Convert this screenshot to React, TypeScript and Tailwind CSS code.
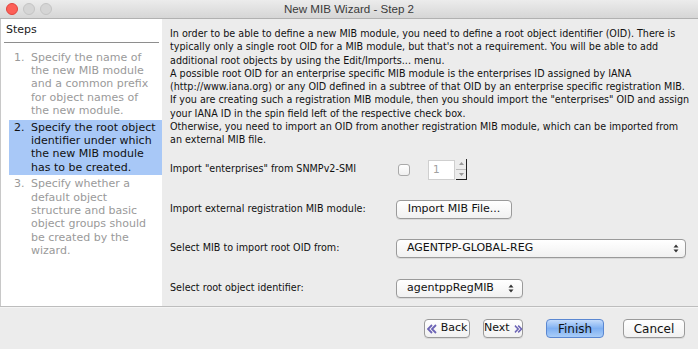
const body = { fontFamily: '"DejaVu Sans", "Liberation Sans", sans-serif' }

const DoubleChevron = ({ dir }: { dir: "left" | "right" }) => (
  <svg width="10" height="10" viewBox="0 0 10 10" className={dir === "right" ? "rotate-180" : ""}>
    <path d="M5 1 L1 5 L5 9 M9 1 L5 5 L9 9" fill="none" stroke="#6b63b5" strokeWidth="1.8" />
  </svg>
)

const UpDown = () => (
  <svg width="6" height="9" viewBox="0 0 6 9">
    <path d="M0.5 3.5 L3 0.5 L5.5 3.5 Z M0.5 5.5 L3 8.5 L5.5 5.5 Z" fill="#333" />
  </svg>
)

const steps = [
  { n: "1.", text: ["Specify the name of", "the new MIB module", "and a common prefix", "for object names of", "the new module."], active: false },
  { n: "2.", text: ["Specify the root object", "identifier under which", "the new MIB module", "has to be created."], active: true },
  { n: "3.", text: ["Specify whether a", "default object", "structure and basic", "object groups should", "be created by the", "wizard."], active: false },
]

const intro = [
  "In order to be able to define a new MIB module, you need to define a root object identifier (OID). There is",
  "typically only a single root OID for a MIB module, but that's not a requirement. You will be able to add",
  "additional root objects by using the Edit/Imports... menu.",
  "A possible root OID for an enterprise specific MIB module is the enterprises ID assigned by IANA",
  "(http://www.iana.org) or any OID defined in a subtree of that OID by an enterprise specific registration MIB.",
  "If you are creating such a registration MIB module, then you should import the \"enterprises\" OID and assign",
  "your IANA ID in the spin field left of the respective check box.",
  "Otherwise, you need to import an OID from another registration MIB module, which can be imported from",
  "an external MIB file.",
]

const btn = "h-[19px] rounded-[4px] border border-[#9a9a9a] bg-gradient-to-b from-white to-[#f1f1f1] shadow-[0_1px_0_rgba(0,0,0,0.08)] flex items-center text-[11px] text-[#111]"

export default function App() {
  return (
    <div className="w-[698px] h-[349px] flex flex-col bg-[#ececec] overflow-hidden" style={body}>
      <div className="h-[19px] shrink-0 relative flex items-center justify-center bg-gradient-to-b from-[#ececec] to-[#d6d6d6] border-b border-[#b1b1b1]">
        <div className="absolute left-[6px] top-[3px] flex gap-[5px]">
          <span className="w-[12px] h-[12px] rounded-full bg-[#fc5f57] border border-[#e0443e]" />
          <span className="w-[12px] h-[12px] rounded-full bg-[#d5d5d5] border border-[#c4c4c4]" />
          <span className="w-[12px] h-[12px] rounded-full bg-[#d5d5d5] border border-[#c4c4c4]" />
        </div>
        <span className="text-[11.6px] text-[#3a3a3a]" style={{ fontFamily: '"Liberation Sans", Arial, sans-serif' }}>
          New MIB Wizard - Step 2
        </span>
      </div>

      <div className="flex h-[287px] shrink-0">
        <div className="w-[162px] shrink-0 bg-white border-l border-[#c8c8c8] flex flex-col">
          <div className="mx-[3px] pl-[2px] pt-[3px] pb-[3px] border-b border-[#8e8e8e] text-[11px] text-[#222]">Steps</div>
          <div className="pl-[8px] pt-[7px] flex flex-col gap-[1px]">
            {steps.map((s) => (
              <div
                key={s.n}
                className={`flex text-[11px] leading-[13.4px] py-[1px] ${s.active ? "bg-[#a8c8f7] text-[#111]" : "text-[#9a9a9a]"}`}
              >
                <span className="w-[22px] pl-[5px] shrink-0">{s.n}</span>
                <div className="flex flex-col">
                  {s.text.map((t) => (
                    <span key={t} className="whitespace-nowrap">{t}</span>
                  ))}
                </div>
              </div>
            ))}
          </div>
        </div>

        <div className="flex-1 pl-[8px] pt-[8px] text-[9.6px] text-[#111]">
          <div className="flex flex-col leading-[13.3px]">
            {intro.map((l) => (
              <span key={l} className="whitespace-nowrap">{l}</span>
            ))}
          </div>

          <div className="mt-[3px] flex flex-col">
            <div className="h-[40px] flex items-center">
              <span className="w-[228px]">Import "enterprises" from SNMPv2-SMI</span>
              <span className="w-[12px] h-[12px] rounded-[3px] border border-[#a9a9a9] bg-gradient-to-b from-white to-[#f0f0f0]" />
              <div className="ml-[18px] w-[27px] h-[20px] border border-[#cfcfcf] bg-white text-[#a0a0a0] text-[10.5px] pl-[4px] flex items-center">1</div>
              <div className="ml-[1px] h-[21px] w-[11px] flex flex-col border-r border-b border-[#222]">
                <div className="flex-1 flex items-center justify-center border-b border-[#bbb]">
                  <svg width="5" height="3" viewBox="0 0 5 3"><path d="M0 3 L2.5 0 L5 3 Z" fill="#999" /></svg>
                </div>
                <div className="flex-1 flex items-center justify-center">
                  <svg width="5" height="3" viewBox="0 0 5 3"><path d="M0 0 L2.5 3 L5 0 Z" fill="#999" /></svg>
                </div>
              </div>
            </div>

            <div className="h-[39px] flex items-center">
              <span className="w-[226px]">Import external registration MIB module:</span>
              <div className={`${btn} w-[116px] justify-center text-[10.5px]`}>Import MIB File...</div>
            </div>

            <div className="h-[39px] flex items-center">
              <span className="w-[226px]">Select MIB to import root OID from:</span>
              <div className={`${btn} w-[290px] pl-[10px] pr-[6px] justify-between shadow-[0_0_0_2px_rgba(110,160,235,0.55)] border-[#7fa6e0]`}>
                <span>AGENTPP-GLOBAL-REG</span>
                <UpDown />
              </div>
            </div>

            <div className="h-[41px] flex items-center">
              <span className="w-[226px]">Select root object identifier:</span>
              <div className={`${btn} w-[127px] pl-[10px] pr-[8px] justify-between`}>
                <span>agentppRegMIB</span>
                <UpDown />
              </div>
            </div>
          </div>
        </div>
      </div>

      <div className="h-[2px] shrink-0 border-t border-[#bdbdbd] bg-[#f4f4f4]" />

      <div className="flex-1 flex items-center justify-end pr-[13px] gap-[13px]">
        <div className="flex gap-[13px]">
          <div className={`${btn} w-[46px] justify-center gap-[4px]`}>
            <DoubleChevron dir="left" />
            <span>Back</span>
          </div>
          <div className={`${btn} w-[40px] justify-center gap-[4px]`}>
            <span>Next</span>
            <DoubleChevron dir="right" />
          </div>
        </div>
        <div className="h-[19px] w-[58px] ml-[10px] rounded-[4px] border border-[#5a87d1] bg-gradient-to-b from-[#c5dcfb] via-[#7fb0f2] to-[#a9cdf8] flex items-center justify-center text-[12px] text-[#111]">
          Finish
        </div>
        <div className={`${btn} w-[62px] ml-[6px] justify-center text-[12px]`}>Cancel</div>
      </div>
    </div>
  )
}
